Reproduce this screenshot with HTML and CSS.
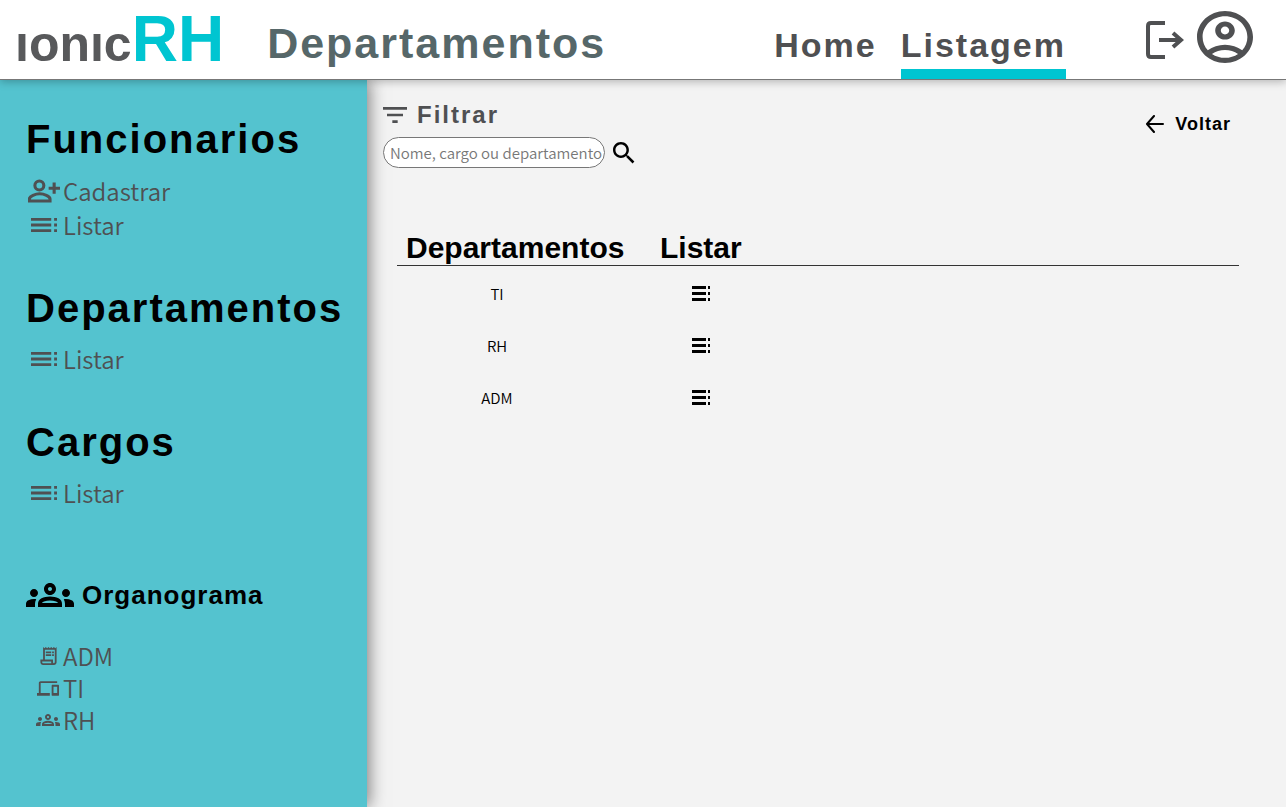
FILE: index.html
```html
<!DOCTYPE html>
<html lang="pt-BR">
<head>
<meta charset="utf-8">
<meta name="viewport" content="width=device-width, initial-scale=1">
<title>ionicRH - Departamentos</title>
<link rel="stylesheet" href="styles.css">
</head>
<body>
<svg class="sprite" aria-hidden="true">
  <symbol id="toc" viewBox="3 7 18 10" preserveAspectRatio="none"><path d="M3 9h14V7H3v2zm0 4h14v-2H3v2zm0 4h14v-2H3v2zm16 0h2v-2h-2v2zm0-10v2h2V7h-2zm0 6h2v-2h-2v2z"/></symbol>
  <symbol id="groups" viewBox="0 6 24 12"><path fill-rule="evenodd" d="M12 12.75c1.63 0 3.07.39 4.24.9 1.08.48 1.76 1.56 1.76 2.73V18H6v-1.61c0-1.18.68-2.26 1.76-2.73 1.17-.52 2.61-.91 4.24-.91zM8.07 16h7.86c-.1-.23-.14-.39-.91-.69-.97-.38-1.99-.56-3.02-.56s-2.05.18-3.02.56c-.78.3-.82.46-.91.69zM4 13c1.1 0 2-.9 2-2s-.9-2-2-2-2 .9-2 2 .9 2 2 2zm1.13 1.1c-.37-.06-.74-.1-1.13-.1-.99 0-1.93.21-2.78.58C.48 14.9 0 15.62 0 16.43V18h4.5v-1.61c0-.83.23-1.61.63-2.29zM20 13c1.1 0 2-.9 2-2s-.9-2-2-2-2 .9-2 2 .9 2 2 2zm4 3.43c0-.81-.48-1.53-1.22-1.85-.85-.37-1.79-.58-2.78-.58-.39 0-.76.04-1.13.1.4.68.63 1.46.63 2.29V18H24v-1.57zM12 6c1.66 0 3 1.34 3 3s-1.34 3-3 3-3-1.34-3-3 1.34-3 3-3zm0 2c-.55 0-1 .45-1 1s.45 1 1 1 1-.45 1-1-.45-1-1-1z"/></symbol>
</svg>

<header class="topbar">
  <a class="logo" href="#" aria-label="ionicRH"><span class="logo-name">ıonıc</span><span class="logo-rh">RH</span></a>
  <h1 class="page-title">Departamentos</h1>
  <nav class="tabs">
    <a class="tab" href="#">Home</a>
    <a class="tab tab-active" href="#" aria-current="page">Listagem</a>
  </nav>
  <div class="account">
    <button class="icon-button exit-button" type="button" aria-label="Sair">
      <svg class="icon-exit" viewBox="0 0 38 38" fill="none" stroke="currentColor" stroke-width="4"><path d="M19 2H5Q2 2 2 5v28q0 3 3 3h14"/><path d="M13 19h22M27 12l8 7-8 7"/></svg>
    </button>
    <button class="icon-button" type="button" aria-label="Perfil">
      <svg class="icon-user" viewBox="2 2 20 20" preserveAspectRatio="none" fill="currentColor"><path d="M12 2C6.48 2 2 6.48 2 12s4.48 10 10 10 10-4.48 10-10S17.52 2 12 2zM7.35 18.5C8.66 17.56 10.26 17 12 17s3.34.56 4.65 1.5C15.34 19.44 13.74 20 12 20s-3.34-.56-4.65-1.5zm10.79-1.38C16.45 15.8 14.32 15 12 15s-4.45.8-6.14 2.12C4.7 15.73 4 13.95 4 12c0-4.42 3.58-8 8-8s8 3.58 8 8c0 1.95-.7 3.73-1.86 5.12z"/><path d="M12 6c-1.93 0-3.5 1.57-3.5 3.5S10.07 13 12 13s3.5-1.57 3.5-3.5S13.93 6 12 6zm0 5c-.83 0-1.5-.67-1.5-1.5S11.17 8 12 8s1.5.67 1.5 1.5S12.83 11 12 11z"/></svg>
    </button>
  </div>
</header>

<div class="layout">
  <aside class="sidebar">
    <section class="group">
      <h2 class="group-title">Funcionarios</h2>
      <ul class="menu">
        <li><a class="menu-link" href="#"><span class="menu-icon"><svg class="icon-add" viewBox="84 238 93 68" fill="none" stroke="currentColor" stroke-width="9"><circle cx="117" cy="256" r="13"/><path d="M88 301v-6c0-8 18-15 30-15s30 7 30 15v6zM144 264h33M160 247v33"/></svg></span>Cadastrar</a></li>
        <li><a class="menu-link" href="#"><span class="menu-icon"><svg class="icon-toc"><use href="#toc"/></svg></span>Listar</a></li>
      </ul>
    </section>
    <section class="group">
      <h2 class="group-title">Departamentos</h2>
      <ul class="menu">
        <li><a class="menu-link" href="#"><span class="menu-icon"><svg class="icon-toc"><use href="#toc"/></svg></span>Listar</a></li>
      </ul>
    </section>
    <section class="group">
      <h2 class="group-title">Cargos</h2>
      <ul class="menu">
        <li><a class="menu-link" href="#"><span class="menu-icon"><svg class="icon-toc"><use href="#toc"/></svg></span>Listar</a></li>
      </ul>
    </section>
    <section class="chart">
      <h2 class="chart-title"><svg class="icon-groups"><use href="#groups"/></svg>Organograma</h2>
      <ul class="menu menu-chart">
        <li><a class="menu-link" href="#"><span class="menu-icon"><svg class="icon-receipt" viewBox="3 2 18 20"><path d="M19.5 3.5L18 2l-1.5 1.5L15 2l-1.5 1.5L12 2l-1.5 1.5L9 2 7.5 3.5 6 2v14H3v3c0 1.66 1.34 3 3 3h12c1.66 0 3-1.34 3-3V2l-1.5 1.5zM15 20H6c-.55 0-1-.45-1-1v-1h10v2zm4-1c0 .55-.45 1-1 1s-1-.45-1-1v-3H8V5h11v14z"/><path d="M9 7h6v2H9zM16 7h2v2h-2zM9 10h6v2H9zM16 10h2v2h-2z"/></svg></span>ADM</a></li>
        <li><a class="menu-link" href="#"><span class="menu-icon"><svg class="icon-devices" viewBox="0 4 24 16"><path d="M4 6h18V4H4c-1.1 0-2 .9-2 2v11H0v3h14v-3H4V6zm19 2h-6c-.55 0-1 .45-1 1v10c0 .55.45 1 1 1h6c.55 0 1-.45 1-1V9c0-.55-.45-1-1-1zm-1 9h-4v-7h4v7z"/></svg></span>TI</a></li>
        <li><a class="menu-link" href="#"><span class="menu-icon"><svg class="icon-people"><use href="#groups"/></svg></span>RH</a></li>
      </ul>
    </section>
  </aside>

  <main class="content">
    <div class="toolbar">
      <form class="filter">
        <label class="filter-label" for="q"><svg class="icon-filter" viewBox="3 6 18 12"><path d="M10 18h4v-2h-4v2zM3 6v2h18V6H3zm3 7h12v-2H6v2z"/></svg>Filtrar</label>
        <div class="filter-row">
          <input class="filter-input" id="q" type="text" placeholder="Nome, cargo ou departamento">
          <button class="icon-button search-button" type="submit" aria-label="Buscar"><svg class="icon-search" viewBox="3 3 18 18"><path d="M15.5 14h-.79l-.28-.27C15.41 12.59 16 11.11 16 9.5 16 5.91 13.09 3 9.5 3S3 5.91 3 9.5 5.91 16 9.5 16c1.61 0 3.09-.59 4.23-1.57l.27.28v.79l5 4.99L20.49 19l-4.99-5zm-6 0C7.01 14 5 11.99 5 9.5S7.01 5 9.5 5 14 7.01 14 9.5 11.99 14 9.5 14z"/></svg></button>
        </div>
      </form>
      <a class="back" href="#"><svg class="icon-back" viewBox="0 0 20 18" fill="none" stroke="currentColor" stroke-width="2" stroke-linecap="round" stroke-linejoin="round"><path d="M18 9H2M9 1L2 9l7 8"/></svg>Voltar</a>
    </div>
    <table class="table">
      <thead><tr><th class="col-name" scope="col">Departamentos</th><th class="col-list" scope="col">Listar</th></tr></thead>
      <tbody>
        <tr><td class="cell-name">TI</td><td class="cell-list"><button class="icon-button" type="button" aria-label="Listar TI"><svg class="icon-row"><use href="#toc"/></svg></button></td></tr>
        <tr><td class="cell-name">RH</td><td class="cell-list"><button class="icon-button" type="button" aria-label="Listar RH"><svg class="icon-row"><use href="#toc"/></svg></button></td></tr>
        <tr><td class="cell-name">ADM</td><td class="cell-list"><button class="icon-button" type="button" aria-label="Listar ADM"><svg class="icon-row"><use href="#toc"/></svg></button></td></tr>
      </tbody>
    </table>
  </main>
</div>
</body>
</html>
```
FILE: styles.css
```css
* { box-sizing: border-box; }

body {
  margin: 0;
  min-height: 100vh;
  display: flex;
  flex-direction: column;
  background: #f3f3f3;
  color: #000;
  font-family: "Noto Sans CJK JP", "Noto Sans", sans-serif;
  font-weight: 350;
}

h1, h2, ul { margin: 0; padding: 0; }
ul { list-style: none; }
a { color: inherit; text-decoration: none; }
svg { display: block; flex: none; fill: currentColor; }
svg[fill="none"] { fill: none; }
.sprite { position: absolute; width: 0; height: 0; }

.icon-button {
  display: flex;
  padding: 0;
  border: 0;
  background: none;
  color: inherit;
  cursor: pointer;
}

.logo, .page-title, .tab, .group-title, .chart-title, .filter-label, .back, th {
  font-family: "Liberation Sans", Arial, sans-serif;
  font-weight: 700;
}

.page-title, .tab, .group-title, .filter-label { letter-spacing: 2px; }
.chart-title, .back { letter-spacing: 1px; }

/* Top bar */
.topbar {
  z-index: 1;
  display: flex;
  align-items: flex-end;
  padding: 0 33px 0 15px;
  background: #fff;
  border-bottom: 1px solid #777;
  box-shadow: 0 2px 8px rgba(0, 0, 0, .25);
}

.logo { display: flex; align-items: baseline; line-height: 60px; padding-bottom: 5px; }
.logo-name { font-size: 50px; color: #58595b; }
.logo-rh { font-size: 64px; color: #00c5d1; }
.page-title { margin-left: 43px; padding-bottom: 13px; font-size: 43px; line-height: 46px; color: #566769; }
.tabs { display: flex; gap: 24px; margin-left: auto; color: #4f5052; }
.tab { padding: 24px 0 3px; font-size: 34px; line-height: 42px; border-bottom: 10px solid transparent; }
.tab-active { border-color: #00c5d1; }
.account { display: flex; align-items: flex-end; gap: 13px; margin-left: 80px; padding-bottom: 16px; color: #4f5052; }
.exit-button { padding-bottom: 4px; }
.icon-exit { width: 38px; height: 38px; }
.icon-user { width: 56px; height: 52px; }

.layout { flex: 1; display: grid; grid-template-columns: minmax(367px, 28.5%) 1fr; }

/* Sidebar */
.sidebar {
  padding: 36px 0 24px 26px;
  background: #54c3cf;
  box-shadow: 2px 0 16px rgba(0, 0, 0, .5);
}

.group { margin-bottom: 43px; }
.group-title { margin-bottom: 12px; font-size: 40px; line-height: 46px; }
.group + .group .group-title { margin-bottom: 11px; }
.menu { color: #4f5052; }
.menu-link { display: flex; align-items: center; gap: 2px; font-size: 24px; line-height: 34px; }
.menu-icon { display: flex; justify-content: center; width: 35px; }
.icon-add { width: 32px; height: 24px; }
.icon-toc { width: 26px; height: 14px; }
.chart { padding-top: 27px; }
.chart-title { display: flex; align-items: center; gap: 8px; margin-bottom: 30px; font-size: 26px; line-height: 30px; }
.icon-groups { width: 48px; height: 24px; }
.menu-chart { padding-left: 9px; }
.menu-chart .menu-link { line-height: 32px; }
.menu-chart .menu-icon { width: 26px; }
.icon-receipt { width: 17px; height: 18px; }
.icon-devices { width: 22px; height: 15px; }
.icon-people { width: 24px; height: 12px; }

/* Content */
.content { padding: 21px 47px 24px 16px; }
.toolbar { display: flex; justify-content: space-between; align-items: flex-start; }
.filter-label { display: flex; align-items: center; gap: 10px; margin-bottom: 8px; font-size: 24px; line-height: 28px; color: #4f5052; }
.icon-filter { width: 24px; height: 16px; }
.filter-row { display: flex; align-items: center; gap: 8px; }
.filter-input {
  width: 222px;
  height: 31px;
  padding: 0 2px 0 6px;
  border: 1px solid #777;
  border-radius: 16px;
  background: #fff;
  font-family: inherit;
  font-size: 15px;
  font-weight: inherit;
}
.filter-input::placeholder { color: #777; }
.icon-search { width: 22px; height: 22px; }
.back { display: flex; align-items: center; gap: 10px; padding: 12px 8px 0 0; font-size: 18px; line-height: 22px; }
.icon-back { width: 20px; height: 18px; }

.table { width: calc(100% - 14px); margin: 63px 0 0 14px; border-collapse: collapse; }
.table thead tr { border-bottom: 1px solid #333; }
.table th { padding: 0; font-size: 30px; line-height: 34px; text-align: left; }
.table .col-name { width: 250px; padding-left: 9px; }
.table .col-list { padding-left: 13px; }
.table tbody tr { height: 52px; }
.table td { padding: 4px 0 0; font-size: 15px; line-height: 22px; }
.table .cell-name { padding-right: 50px; text-align: center; }
.table .cell-list { padding-left: 45px; }
.icon-row { width: 18px; height: 15px; }
```
